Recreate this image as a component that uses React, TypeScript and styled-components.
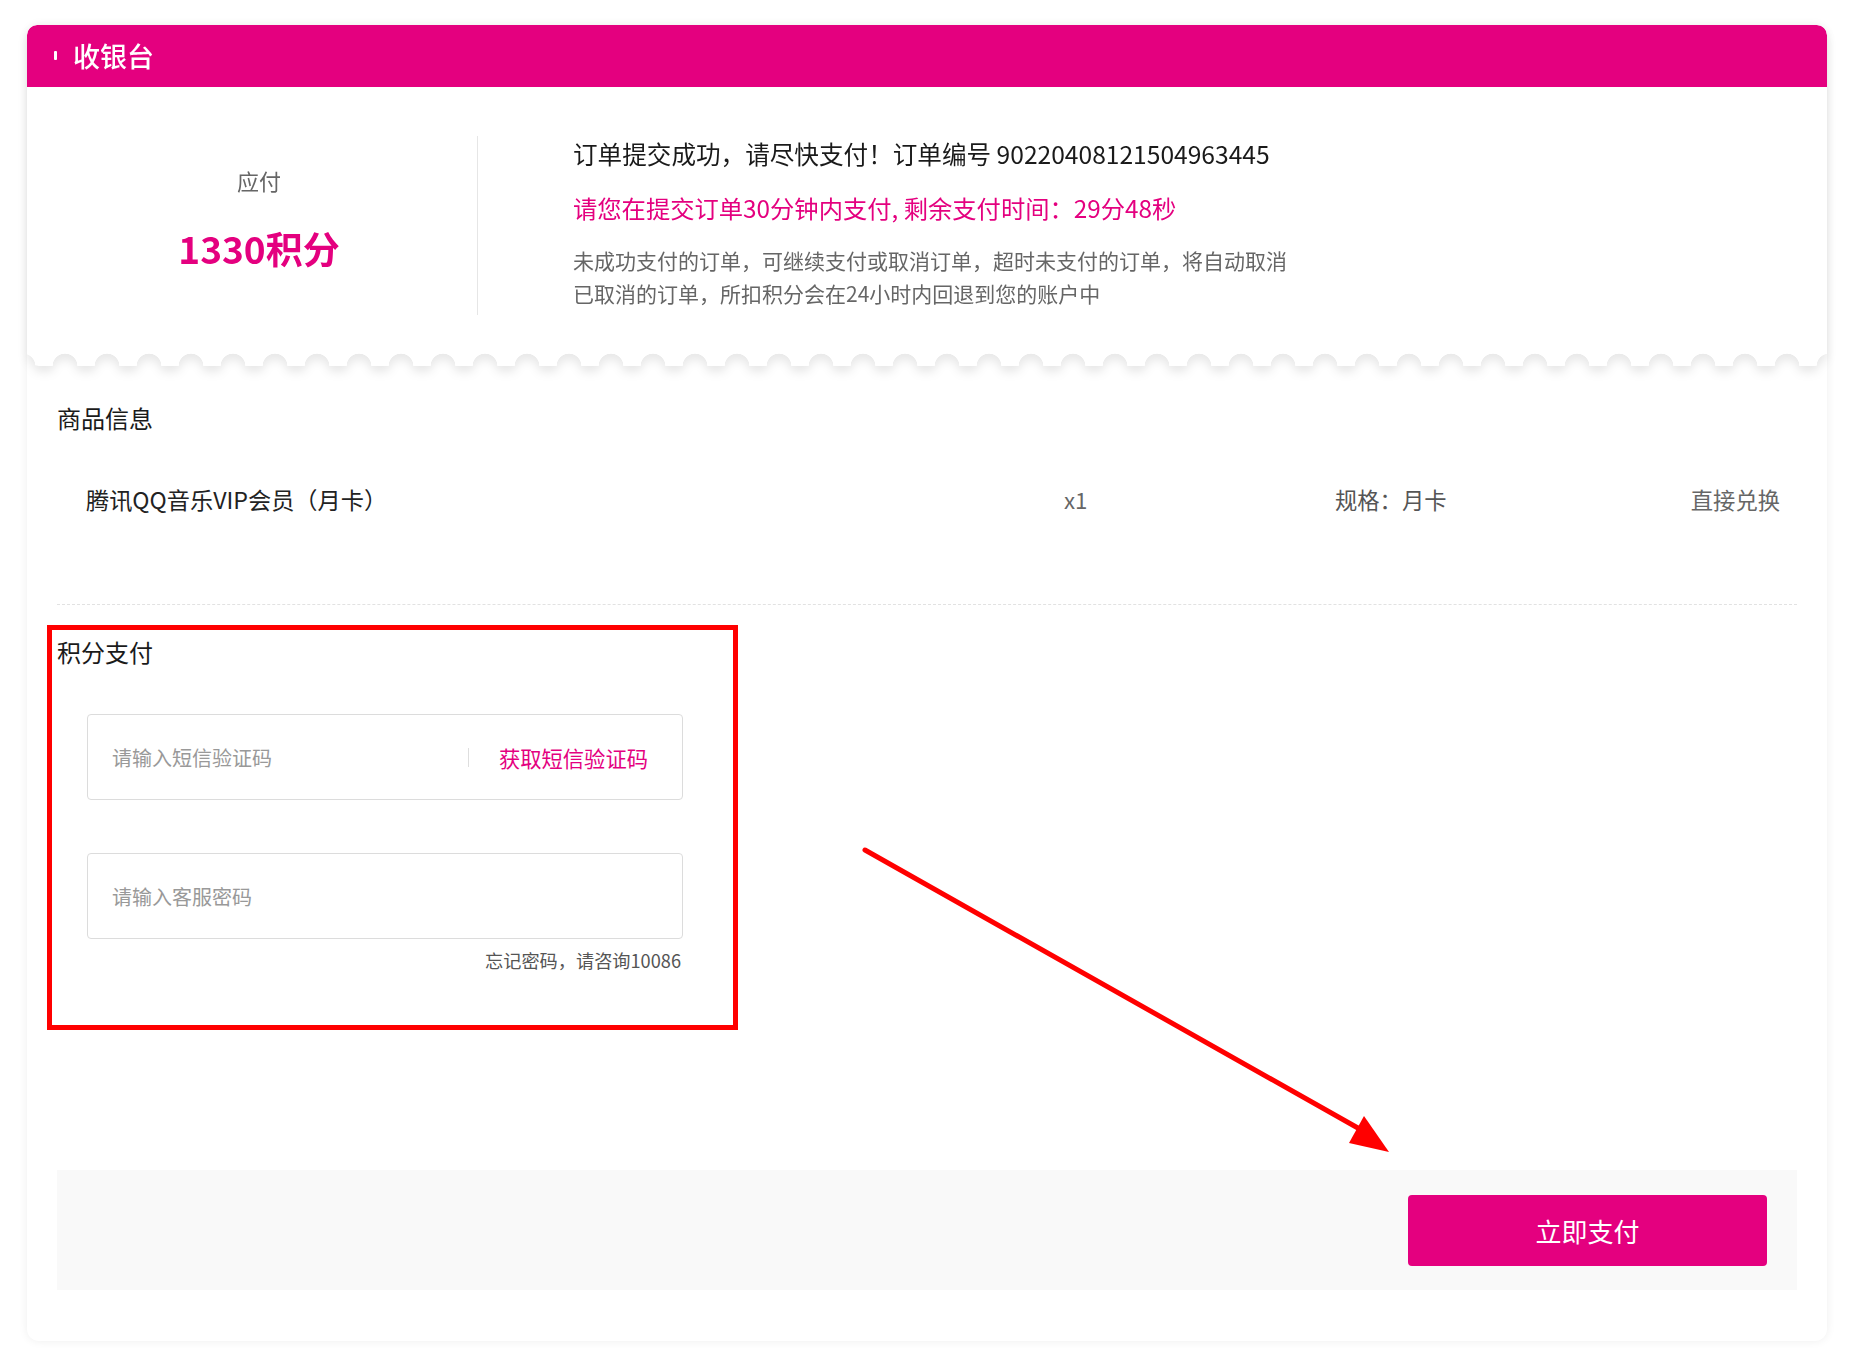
import React from "react";
import styled, { createGlobalStyle } from "styled-components";

const PINK = "#e4007f";

const GlobalStyle = createGlobalStyle`
	* {
		box-sizing: border-box;
	}
	body {
		margin: 0;
		background: #ffffff;
		font-family: "Noto Sans CJK SC", "Noto Sans", sans-serif;
		color: #222;
	}
`;

const Page = styled.div`
	padding: 25px 0 9px 27px;
`;

const Card = styled.div`
	position: relative;
	width: 1800px;
	background: #ffffff;
	border-radius: 12px;
	box-shadow: 0 0 10px rgba(0, 0, 0, 0.07);
	padding-bottom: 51px;
`;

const TicketShadow = styled.div`
	filter: drop-shadow(0 6px 5px rgba(0, 0, 0, 0.09));
`;

const Ticket = styled.div`
	background: #ffffff;
	border-radius: 10px 10px 12px 12px;
	-webkit-mask: radial-gradient(circle at 50% 100%, transparent 12px, #000 12.6px) 17px 0 / 42px 100% repeat-x;
	mask: radial-gradient(circle at 50% 100%, transparent 12px, #000 12.6px) 17px 0 / 42px 100% repeat-x;
`;

const Header = styled.div`
	height: 62px;
	background: ${PINK};
	border-radius: 10px 10px 0 0;
	display: flex;
	align-items: center;
	padding-left: 27px;
	padding-bottom: 2px;
	gap: 16px;
	color: #ffffff;
	font-size: 27px;
	font-weight: 500;
`;

const HeaderMark = styled.span`
	width: 3px;
	height: 9px;
	background: #ffffff;
	border-radius: 1px;
`;

const Summary = styled.div`
	display: flex;
	padding: 49px 0 51px;
`;

const AmountCol = styled.div`
	width: 450px;
	display: flex;
	flex-direction: column;
	align-items: center;
	padding: 29px 0 0 14px;
	gap: 31px;
`;

const AmountLabel = styled.div`
	font-size: 22px;
	line-height: 30px;
	color: #666;
`;

const AmountValue = styled.div`
	font-size: 37px;
	line-height: 44px;
	font-weight: 700;
	color: ${PINK};
`;

const VDivider = styled.div`
	width: 1px;
	height: 179px;
	background: #e6e6e6;
`;

const InfoCol = styled.div`
	padding-left: 95px;
	display: flex;
	flex-direction: column;
`;

const OrderLine = styled.div`
	font-size: 24.6px;
	line-height: 34px;
	color: #1a1a1a;
`;

const TimerLine = styled.div`
	margin-top: 21px;
	font-size: 24.3px;
	line-height: 34px;
	color: ${PINK};
`;

const NoteLine = styled.div<{ $first?: boolean }>`
	margin-top: ${({ $first }) => ($first ? "19px" : "0")};
	font-size: 21px;
	line-height: 33px;
	color: #666;
`;

const Body = styled.div`
	padding: 0 30px;
`;

const SectionTitle = styled.div<{ $top: number }>`
	margin-top: ${({ $top }) => $top}px;
	font-size: 24px;
	line-height: 32px;
	color: #1a1a1a;
`;

const ProductRow = styled.div`
	margin-top: 50px;
	display: grid;
	grid-template-columns: 978px 271px 1fr auto;
	align-items: center;
	padding: 0 17px 0 29px;
	font-size: 22.3px;
	line-height: 30px;
`;

const ProductName = styled.div`
	font-size: 23.2px;
	color: #222;
`;

const ProductMeta = styled.div<{ $tone: string }>`
	color: ${({ $tone }) => $tone};
`;

const DottedLine = styled.div`
	margin-top: 90px;
	border-top: 1px dashed #e2e2e2;
`;

const Fields = styled.div`
	width: 596px;
	margin: 46px 0 0 30px;
	display: flex;
	flex-direction: column;
`;

const FieldBox = styled.div<{ $top: number }>`
	margin-top: ${({ $top }) => $top}px;
	height: 86px;
	border: 1px solid #dcdcdc;
	border-radius: 4px;
	display: flex;
	align-items: center;
	padding: 0 34px 0 22px;
`;

const FieldInput = styled.input`
	flex: 1;
	min-width: 0;
	border: none;
	outline: none;
	background: transparent;
	font-family: inherit;
	font-size: 20px;
	color: #333;

	&::placeholder {
		color: #999;
	}
`;

const FieldSep = styled.span`
	width: 1px;
	height: 19px;
	background: #dedede;
	margin-right: 30px;
`;

const SmsLink = styled.span`
	font-size: 21.3px;
	color: ${PINK};
	cursor: pointer;
`;

const ForgotHint = styled.div`
	margin-top: 9px;
	padding-right: 2px;
	text-align: right;
	font-size: 18.2px;
	line-height: 24px;
	color: #555;
`;

const FooterBar = styled.div`
	margin-top: 198px;
	height: 120px;
	background: #f9f9f9;
	display: flex;
	align-items: center;
	justify-content: flex-end;
	padding-right: 30px;
`;

const PayButton = styled.button`
	width: 359px;
	height: 71px;
	border: none;
	border-radius: 4px;
	background: ${PINK};
	color: #ffffff;
	font-family: inherit;
	font-size: 26px;
	cursor: pointer;
`;

/* red annotation drawn over the screenshot */
const MarkBox = styled.div`
	position: absolute;
	left: 20px;
	top: 600px;
	width: 691px;
	height: 405px;
	border: 5px solid #ff0000;
	pointer-events: none;
`;

const ArrowLayer = styled.svg`
	position: absolute;
	left: 0;
	top: 0;
	width: 1800px;
	height: 1300px;
	pointer-events: none;
`;

export default function App() {
	return (
		<Page>
			<GlobalStyle />
			<Card>
				<TicketShadow>
					<Ticket>
						<Header>
							<HeaderMark />
							收银台
						</Header>
						<Summary>
							<AmountCol>
								<AmountLabel>应付</AmountLabel>
								<AmountValue>1330积分</AmountValue>
							</AmountCol>
							<VDivider />
							<InfoCol>
								<OrderLine>订单提交成功，请尽快支付！订单编号 90220408121504963445</OrderLine>
								<TimerLine>请您在提交订单30分钟内支付, 剩余支付时间：29分48秒</TimerLine>
								<NoteLine $first>未成功支付的订单，可继续支付或取消订单，超时未支付的订单，将自动取消</NoteLine>
								<NoteLine>已取消的订单，所扣积分会在24小时内回退到您的账户中</NoteLine>
							</InfoCol>
						</Summary>
					</Ticket>
				</TicketShadow>

				<Body>
					<SectionTitle $top={36}>商品信息</SectionTitle>
					<ProductRow>
						<ProductName>腾讯QQ音乐VIP会员（月卡）</ProductName>
						<ProductMeta $tone="#666">x1</ProductMeta>
						<ProductMeta $tone="#555">规格：月卡</ProductMeta>
						<ProductMeta $tone="#666">直接兑换</ProductMeta>
					</ProductRow>
					<DottedLine />

					<SectionTitle $top={31}>积分支付</SectionTitle>
					<Fields>
						<FieldBox $top={0}>
							<FieldInput placeholder="请输入短信验证码" />
							<FieldSep />
							<SmsLink>获取短信验证码</SmsLink>
						</FieldBox>
						<FieldBox $top={53}>
							<FieldInput type="password" placeholder="请输入客服密码" />
						</FieldBox>
						<ForgotHint>忘记密码，请咨询10086</ForgotHint>
					</Fields>

					<FooterBar>
						<PayButton>立即支付</PayButton>
					</FooterBar>
				</Body>

				<MarkBox />
				<ArrowLayer viewBox="0 0 1800 1300">
					<line x1="838" y1="825" x2="1338" y2="1107" stroke="#ff0000" strokeWidth="5" strokeLinecap="round" />
					<polygon points="1362,1127 1322,1118 1337,1091" fill="#ff0000" />
				</ArrowLayer>
			</Card>
		</Page>
	);
}
